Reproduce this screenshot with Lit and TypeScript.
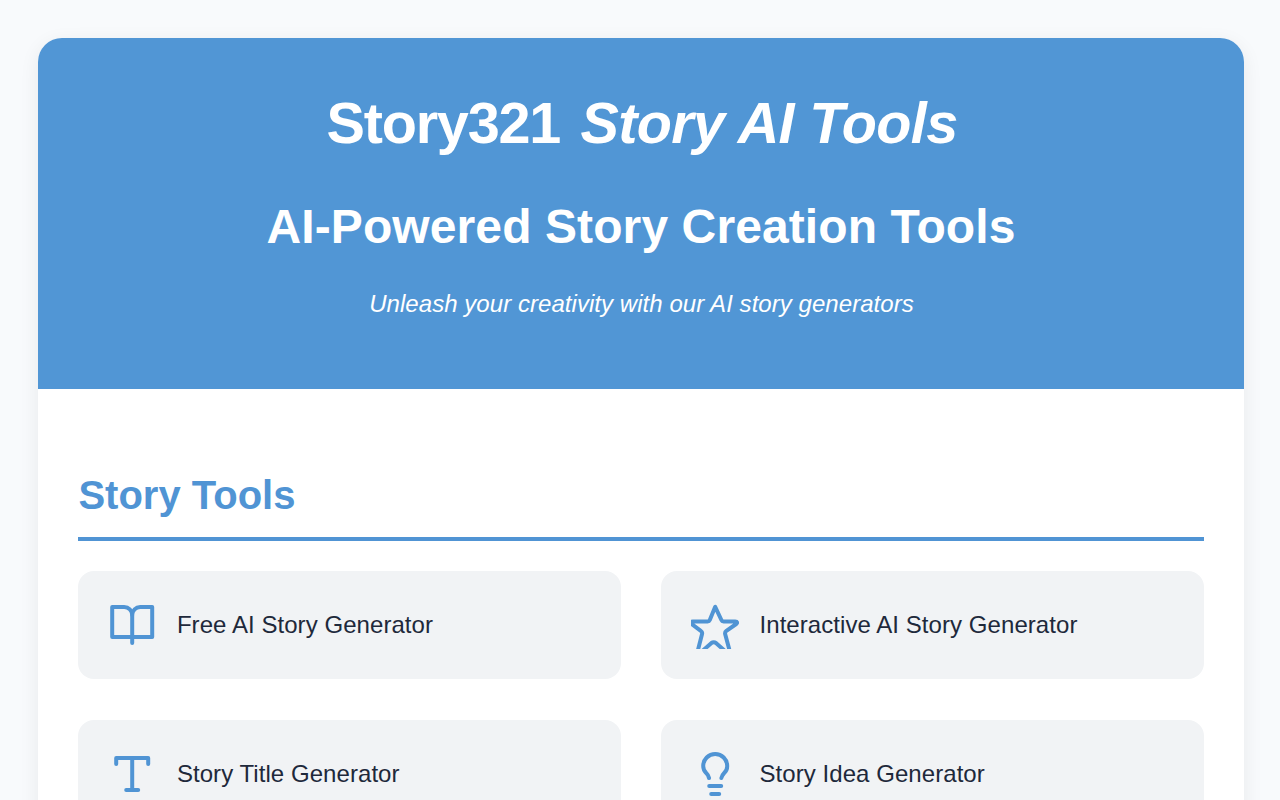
import { LitElement, html, css, svg } from "lit";
import { customElement, property } from "lit/decorators.js";

const icons = {
  book: svg`
    <path d="M12.1 7a4 4 0 0 0-4-4H2.1v15h20V3h-6a4 4 0 0 0-4 4z" />
    <path d="M12.1 7v14" />
  `,
  star: svg`
    <path d="M12.1 2.9l-2.7 6.6c-.2.5-.6.7-1.1.7H.9c-.9 0-1.2.9-.5 1.4l4.5 3.3c.6.4.8 1 .6 1.7l-2.1 8.2c-.2.8.7 1.4 1.5.9l5.2-4.6c.8-.6 1.7-.6 2.5 0l5.2 4.6c.7.5 1.7.1 1.5-.9l-2.2-8.2c-.2-.7 0-1.2.6-1.7l4.9-3.4c.7-.5.6-1.3-.5-1.3h-5.8c-.5 0-.9-.2-1.1-.7z" />
  `,
  type: svg`
    <path d="M4.1 7V4h16v3" />
    <path d="M9.1 20h6" />
    <path d="M12.1 4v16" />
  `,
  bulb: svg`
    <path d="M15.19 14c.18-.98.65-1.74 1.41-2.5A4.65 4.65 0 0 0 18.1 8 6 6 0 0 0 6.1 8c0 1 .23 2.23 1.5 3.5A4.61 4.61 0 0 1 9.01 14" />
    <path d="M9.1 18h6" />
    <path d="M10.1 22h4" />
  `,
};

type IconName = keyof typeof icons;

const tools: { icon: IconName; label: string }[] = [
  { icon: "book", label: "Free AI Story Generator" },
  { icon: "star", label: "Interactive AI Story Generator" },
  { icon: "type", label: "Story Title Generator" },
  { icon: "bulb", label: "Story Idea Generator" },
];

@customElement("tool-card")
export class ToolCard extends LitElement {
  static styles = css`
    :host {
      display: flex;
      align-items: center;
      gap: 20.5px;
      box-sizing: border-box;
      height: 108px;
      padding: 30px;
      background: #f1f3f5;
      border-radius: 16px;
      color: #1e293b;
      font-size: 24px;
      letter-spacing: 0.06px;
      cursor: pointer;
    }

    .icon {
      flex: none;
      width: 48px;
      height: 48px;
      fill: none;
      stroke: #5094d4;
      stroke-width: 2;
      stroke-linecap: round;
      stroke-linejoin: round;
      overflow: hidden;
    }
  `;

  @property() icon: IconName = "book";
  @property() label = "";

  render() {
    return html`
      <svg class="icon" viewBox="0 0 24 24">${icons[this.icon]}</svg>
      <span>${this.label}</span>
    `;
  }
}

@customElement("app-root")
export class AppRoot extends LitElement {
  static styles = css`
    :host {
      display: block;
      box-sizing: border-box;
      height: 100vh;
      padding: 38.4px 36.4px 0 38.4px;
      overflow: hidden;
      background: #f8fafc;
      font-family: "Liberation Sans", Arial, sans-serif;
    }

    .container {
      min-height: 900px;
      background: #fff;
      border-radius: 24px;
      box-shadow: 0 5px 20px rgba(0, 0, 0, 0.07);
      overflow: hidden;
    }

    header {
      box-sizing: border-box;
      height: 350.6px;
      padding-top: 52px;
      background: #5196d5;
      color: #fff;
      text-align: center;
    }

    h1,
    h2,
    p {
      margin: 0;
    }

    h1 {
      padding-left: 2px;
      font-size: 57.6px;
      line-height: 66px;
      letter-spacing: -1.2px;
    }

    h1 em {
      margin-left: 5.5px;
      letter-spacing: -0.65px;
    }

    .subtitle {
      margin-top: 43px;
      font-size: 48px;
      line-height: 56px;
      letter-spacing: 0.1px;
    }

    .tagline {
      margin-top: 35px;
      padding-left: 1px;
      font-size: 24px;
      line-height: 28px;
      font-style: italic;
      letter-spacing: 0.05px;
    }

    main {
      padding: 80px 40px;
    }

    .heading {
      padding: 2px 0 17px;
      border-bottom: 4px solid #5094d4;
      color: #5094d4;
      font-size: 40px;
      line-height: 49px;
    }

    .tools {
      display: grid;
      grid-template-columns: 1fr 1fr;
      gap: 41px 40px;
      margin-top: 30px;
    }
  `;

  render() {
    return html`
      <div class="container">
        <header>
          <h1>Story321 <em>Story AI Tools</em></h1>
          <h2 class="subtitle">AI-Powered Story Creation Tools</h2>
          <p class="tagline">Unleash your creativity with our AI story generators</p>
        </header>
        <main>
          <h2 class="heading">Story Tools</h2>
          <div class="tools">
            ${tools.map(
              (tool) => html`<tool-card .icon=${tool.icon} .label=${tool.label}></tool-card>`
            )}
          </div>
        </main>
      </div>
    `;
  }
}
